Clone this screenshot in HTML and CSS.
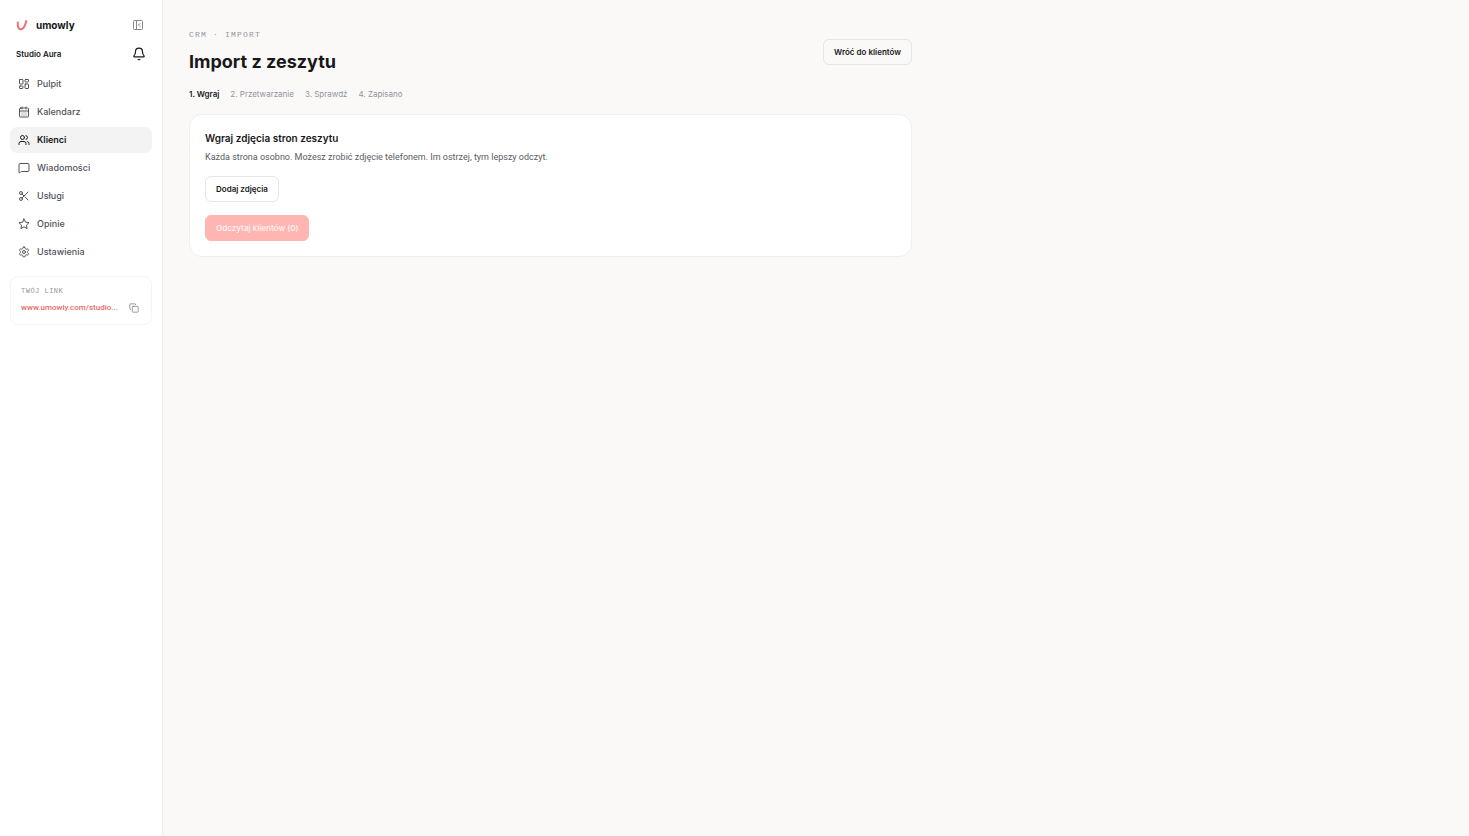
FILE: index.html
```html
<!DOCTYPE html>
<html lang="pl">
<head>
<meta charset="utf-8">
<meta name="viewport" content="width=device-width, initial-scale=1">
<title>Import z zeszytu – umowly</title>
<link rel="stylesheet" href="styles.css">
</head>
<body>
<div class="app">
  <aside class="sidebar">
    <div class="brand-row">
      <a class="brand" href="#">
        <svg class="logo" viewBox="0 0 12 12" aria-hidden="true"><path d="M1.800 3.400c-.3 3.800 .5 6.900 3.100 6.900 2.600 0 4.300-3.700 5.300-8.300" fill="none" stroke="#ee7178" stroke-width="2" stroke-linecap="round"/></svg>
        <span>umowly</span>
      </a>
      <button class="icon-button muted" type="button" aria-label="Zwiń menu">
        <svg class="icon" viewBox="0 0 24 24"><rect x="3" y="3" width="18" height="18" rx="2"/><path d="M9 3v18M16 15l-3-3 3-3"/></svg>
      </button>
    </div>
    <div class="studio-row">
      <span class="studio">Studio Aura</span>
      <button class="icon-button bell" type="button" aria-label="Powiadomienia">
        <svg class="icon" viewBox="0 0 24 24"><path d="M10.300 21a2 2 0 0 0 3.400 0M3.300 15.300A1 1 0 0 0 4 17h16a1 1 0 0 0 .7-1.700C19.400 14 18 12.500 18 8A6 6 0 0 0 6 8c0 4.500-1.400 6-2.700 7.300"/></svg>
      </button>
    </div>
    <nav class="nav">
      <a class="nav-item" href="#"><svg class="icon" viewBox="0 0 24 24"><rect x="3" y="3" width="7" height="9" rx="1"/><rect x="14" y="3" width="7" height="5" rx="1"/><rect x="14" y="12" width="7" height="9" rx="1"/><rect x="3" y="16" width="7" height="5" rx="1"/></svg>Pulpit</a>
      <a class="nav-item" href="#"><svg class="icon" viewBox="0 0 24 24"><path d="M8 2v4M16 2v4M3 10h18M8 14h.01M12 14h.01M16 14h.01M8 18h.01M12 18h.01M16 18h.01"/><rect x="3" y="4" width="18" height="18" rx="2"/></svg>Kalendarz</a>
      <a class="nav-item active" href="#" aria-current="page"><svg class="icon" viewBox="0 0 24 24"><path d="M16 21v-2a4 4 0 0 0-4-4H6a4 4 0 0 0-4 4v2M22 21v-2a4 4 0 0 0-3-3.870M16 3.130a4 4 0 0 1 0 7.750"/><circle cx="9" cy="7" r="4"/></svg>Klienci</a>
      <a class="nav-item" href="#"><svg class="icon" viewBox="0 0 24 24"><path d="M22 17a2 2 0 0 1-2 2H6.800a2 2 0 0 0-1.400.6l-2.200 2.200A.7.7 0 0 1 2 21.300V5a2 2 0 0 1 2-2h16a2 2 0 0 1 2 2z"/></svg>Wiadomości</a>
      <a class="nav-item" href="#"><svg class="icon" viewBox="0 0 24 24"><circle cx="6" cy="6" r="3"/><circle cx="6" cy="18" r="3"/><path d="M8.120 8.120 12 12M20 4 8.120 15.880M14.800 14.800 20 20"/></svg>Usługi</a>
      <a class="nav-item" href="#"><svg class="icon" viewBox="0 0 24 24"><path d="m12 2 3.100 6.300 6.900 1-5 4.900 1.200 6.900-6.200-3.300-6.200 3.300L7 14.200 2 9.300l6.900-1z"/></svg>Opinie</a>
      <a class="nav-item" href="#"><svg class="icon" viewBox="0 0 24 24"><path d="M12.220 2h-.44a2 2 0 0 0-2 2v.18a2 2 0 0 1-1 1.730l-.43.25a2 2 0 0 1-2 0l-.15-.08a2 2 0 0 0-2.730.73l-.22.38a2 2 0 0 0 .73 2.730l.15.1a2 2 0 0 1 1 1.720v.51a2 2 0 0 1-1 1.740l-.15.09a2 2 0 0 0-.73 2.730l.22.38a2 2 0 0 0 2.730.73l.15-.08a2 2 0 0 1 2 0l.43.25a2 2 0 0 1 1 1.730V20a2 2 0 0 0 2 2h.44a2 2 0 0 0 2-2v-.18a2 2 0 0 1 1-1.730l.43-.25a2 2 0 0 1 2 0l.15.08a2 2 0 0 0 2.730-.73l.22-.39a2 2 0 0 0-.73-2.730l-.15-.08a2 2 0 0 1-1-1.740v-.5a2 2 0 0 1 1-1.740l.15-.09a2 2 0 0 0 .73-2.730l-.22-.38a2 2 0 0 0-2.730-.73l-.15.08a2 2 0 0 1-2 0l-.43-.25a2 2 0 0 1-1-1.730V4a2 2 0 0 0-2-2z"/><circle cx="12" cy="12" r="3"/></svg>Ustawienia</a>
    </nav>
    <section class="link-card">
      <h2 class="link-label">TWÓJ LINK</h2>
      <div class="link-row">
        <a class="public-link" href="#">www.umowly.com/studio...</a>
        <button class="icon-button copy" type="button" aria-label="Kopiuj link">
          <svg class="icon" viewBox="0 0 24 24"><rect x="8" y="8" width="14" height="14" rx="2"/><path d="M4 16a2 2 0 0 1-2-2V4a2 2 0 0 1 2-2h10a2 2 0 0 1 2 2"/></svg>
        </button>
      </div>
    </section>
  </aside>
  <main class="main">
    <div class="content">
      <header class="page-header">
        <div>
          <p class="eyebrow">CRM · IMPORT</p>
          <h1 class="title">Import z zeszytu</h1>
        </div>
        <button class="button" type="button">Wróć do klientów</button>
      </header>
      <ol class="steps">
        <li class="current" aria-current="step">1. Wgraj</li>
        <li>2. Przetwarzanie</li>
        <li>3. Sprawdź</li>
        <li>4. Zapisano</li>
      </ol>
      <section class="card">
        <h2 class="card-title">Wgraj zdjęcia stron zeszytu</h2>
        <p class="card-text">Każda strona osobno. Możesz zrobić zdjęcie telefonem. Im ostrzej, tym lepszy odczyt.</p>
        <button class="button" type="button">Dodaj zdjęcia</button>
        <button class="button primary" type="button" disabled>Odczytaj klientów (0)</button>
      </section>
    </div>
  </main>
</div>
</body>
</html>
```

FILE: styles.css
```css
* {
  box-sizing: border-box;
}

body {
  margin: 0;
  background: #faf9f7;
  color: #18181b;
  font: 9px/14px "Inter", "Liberation Sans", sans-serif;
}

h1, h2, p, ol {
  margin: 0;
  padding: 0;
}

a {
  color: inherit;
  text-decoration: none;
}

button {
  font: inherit;
  color: inherit;
}

.app {
  display: grid;
  grid-template-columns: 163px 1fr;
  min-height: 100vh;
}

.sidebar {
  padding: 16px 10px;
  background: #fff;
  border-right: 1px solid #ececec;
}

.brand-row,
.studio-row {
  display: flex;
  align-items: center;
  justify-content: space-between;
  padding: 0 6px;
}

.brand-row {
  height: 18px;
  padding-right: 8px;
}

.studio-row {
  height: 18px;
  margin-top: 11px;
}

.brand {
  display: flex;
  align-items: center;
  gap: 8px;
  font: 700 10px/16px "Inter", sans-serif;
}

.logo {
  width: 12px;
  height: 12px;
}

.icon {
  display: block;
  flex: none;
  width: 12px;
  height: 12px;
  fill: none;
  stroke: currentColor;
  stroke-width: 2;
  stroke-linecap: round;
  stroke-linejoin: round;
}

.icon-button {
  padding: 0;
  border: 0;
  background: none;
}

.muted {
  color: #85858c;
}

.bell .icon {
  width: 14px;
  height: 14px;
}

.studio {
  font-size: 8px;
  font-weight: 600;
}

.nav {
  display: grid;
  gap: 2px;
  margin-top: 8px;
}

.nav-item {
  display: flex;
  align-items: center;
  gap: 7px;
  height: 26px;
  padding: 0 8px;
  border-radius: 7px;
  color: #52525b;
  font-size: 9px;
  font-weight: 500;
}

.nav-item.active {
  background: #f3f3f3;
  color: #18181b;
  font-weight: 600;
}

.link-card {
  margin-top: 11px;
  padding: 7px 10px;
  border: 1px solid #f4f4f4;
  border-radius: 8px;
}

.link-label,
.eyebrow {
  color: #96969d;
  font-family: "Liberation Mono", monospace;
  font-weight: 400;
}

.link-label {
  font-size: 7px;
  line-height: 14px;
  letter-spacing: 0.07em;
}

.link-row {
  display: flex;
  align-items: center;
  justify-content: space-between;
  height: 18px;
  margin-top: 1px;
}

.public-link {
  color: #e56b66;
  font-family: "Roboto", sans-serif;
  font-size: 8px;
  font-weight: 500;
}

.copy {
  margin-right: 2px;
  color: #85858c;
}

.copy .icon {
  width: 10px;
  height: 10px;
}

.main {
  padding: 28px 26px;
}

.content {
  max-width: 723px;
}

.page-header {
  display: flex;
  align-items: center;
  justify-content: space-between;
}

.eyebrow {
  font-size: 8px;
  line-height: 14px;
  letter-spacing: 0.15em;
}

.title {
  margin-top: 7px;
  font-size: 18px;
  line-height: 26px;
  font-weight: 700;
}

.button {
  display: block;
  height: 26px;
  padding: 0 10px;
  border: 1px solid #e6e6e6;
  border-radius: 6px;
  background: transparent;
  font-size: 8px;
  font-weight: 600;
}

.steps {
  display: flex;
  gap: 11px;
  margin-top: 12px;
  list-style: none;
  color: #94949c;
  font-size: 8px;
}

.steps .current {
  color: #18181b;
  font-weight: 600;
}

.card {
  margin-top: 13px;
  padding: 15px;
  border: 1px solid #f0efee;
  border-radius: 13px;
  background: #fff;
}

.card-title {
  font-size: 10px;
  line-height: 16px;
  font-weight: 600;
}

.card-text {
  margin: 4px 0 12px;
  color: #5b5b63;
  font-family: "Roboto", sans-serif;
}

.primary {
  margin-top: 13px;
  border-color: #ffb5b1;
  background: #ffb5b1;
  color: #fff0ef;
}
```
